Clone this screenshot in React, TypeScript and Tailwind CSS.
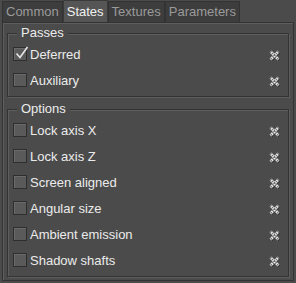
import React from "react";

const XIcon = () => (
  <svg width="13" height="13" viewBox="0 0 13 13" className="block">
    <path d="M2.5 2.5 L10.5 10.5 M10.5 2.5 L2.5 10.5" stroke="#2a2a2a" strokeWidth="2.6" transform="translate(0.7,0.7)" />
    <path d="M2.5 2.5 L10.5 10.5 M10.5 2.5 L2.5 10.5" stroke="#f0f0f0" strokeWidth="2.6" />
    <path d="M2.5 2.5 L10.5 10.5 M10.5 2.5 L2.5 10.5" stroke="#6a6a6a" strokeWidth="2.6" strokeDasharray="1 1.4" />
  </svg>
);

const Check = ({ checked }: { checked?: boolean }) => (
  <div className="relative w-[14px] h-[14px] border border-[#2e2e2e] bg-[#5a5a5a] shadow-[inset_1px_1px_0_#6a6a6a]">
    {checked && (
      <svg width="16" height="16" viewBox="0 0 16 16" className="absolute left-[0px] top-[-3px]">
        <path d="M2.5 8.5 L6 12.5 L13.5 2" fill="none" stroke="#e6e6e6" strokeWidth="1.6" />
      </svg>
    )}
  </div>
);

const Row = ({ label, checked }: { label: string; checked?: boolean }) => (
  <div className="flex items-center h-[26px] pl-[5px] pr-[7px]">
    <Check checked={checked} />
    <span className="ml-[3px] text-[13px] text-[#ebebeb] leading-none">{label}</span>
    <div className="ml-auto mt-[2px]">
      <XIcon />
    </div>
  </div>
);

const Group = ({ title, children }: { title: string; children: React.ReactNode }) => (
  <div className="relative border border-[#333333] shadow-[1px_1px_0_#5e5e5e,inset_1px_1px_0_#5e5e5e] pt-[7px] pb-[3px]">
    <div className="absolute left-[9px] top-[-9px] bg-[#4b4b4b] px-[4px] text-[13px] leading-[15px] text-[#ebebeb]">
      {title}
    </div>
    {children}
  </div>
);

export default function App() {
  const tabs = ["Common", "States", "Textures", "Parameters"];
  return (
    <div
      className="w-[296px] h-[283px] bg-[#4b4b4b] overflow-hidden"
      style={{ fontFamily: '"Liberation Sans", Arial, sans-serif' }}
    >
      <div className="flex h-[22px] pl-[2px] bg-[#4b4b4b]">
        {tabs.map((t) => {
          const sel = t === "States";
          return (
            <div
              key={t}
              className={
                sel
                  ? "h-[22px] px-[3px] flex items-center bg-[#555555] border-t border-x border-[#3a3a3a] text-[13px] text-[#f0f0f0]"
                  : "h-[21px] mt-[1px] px-[3px] flex items-center bg-[#3d3d3d] border-t border-x border-[#333333] text-[13px] text-[#9a9a9a]"
              }
            >
              {t}
            </div>
          );
        })}
      </div>
      <div className="mx-[2px] h-[259px] border border-[#333333] shadow-[inset_1px_1px_0_#5e5e5e] pt-[10px] px-[4px]">
        <Group title="Passes">
          <Row label="Deferred" checked />
          <Row label="Auxiliary" />
        </Group>
        <div className="h-[12px]" />
        <Group title="Options">
          <Row label="Lock axis X" />
          <Row label="Lock axis Z" />
          <Row label="Screen aligned" />
          <Row label="Angular size" />
          <Row label="Ambient emission" />
          <Row label="Shadow shafts" />
        </Group>
      </div>
    </div>
  );
}
